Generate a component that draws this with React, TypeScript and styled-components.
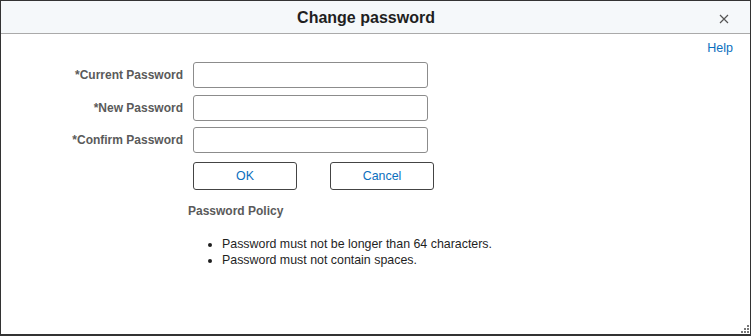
import React, { FC } from 'react'
import styled, { createGlobalStyle } from 'styled-components'

const GlobalStyle = createGlobalStyle`
  html, body {
    margin: 0;
    padding: 0;
    background: #ffffff;
  }
  body {
    font-family: "Liberation Sans", Arial, sans-serif;
    font-size: 12px;
  }
`

const Dialog = styled.div`
  position: relative;
  box-sizing: border-box;
  width: 751px;
  height: 336px;
  border: 1px solid #333333;
  border-bottom-width: 2px;
  background: #ffffff;
  display: flex;
  flex-direction: column;
`

const Header = styled.div`
  height: 32px;
  background: #f5f8fa;
  border-bottom: 1px solid #aaaaaa;
  display: flex;
  align-items: center;
  justify-content: center;
  position: relative;
`

const Title = styled.h1`
  margin: 1px 0 0;
  font-size: 16px;
  font-weight: bold;
  color: #1f1f1f;
  padding-right: 19px;
`

const CloseButton = styled.button`
  position: absolute;
  right: 20px;
  top: 12px;
  width: 12px;
  height: 12px;
  padding: 0;
  border: 0;
  background: none;
  display: flex;
  align-items: center;
  justify-content: center;
`

const Body = styled.div`
  flex: 1;
  padding: 7px 17px 0 0;
  display: flex;
  flex-direction: column;
`

const HelpLink = styled.a`
  align-self: flex-end;
  line-height: 14px;
  font-size: 12.5px;
  color: #0b6fbe;
  text-decoration: none;
`

const Form = styled.div`
  margin-top: 7px;
  display: grid;
  grid-template-columns: 182px 235px;
  column-gap: 10px;
  row-gap: 6.5px;
  align-items: center;
`

const Label = styled.label`
  text-align: right;
  font-weight: bold;
  color: #5a5a5a;
`

const Input = styled.input`
  box-sizing: border-box;
  height: 26px;
  width: 235px;
  margin: 0;
  border: 1px solid #8c8c8c;
  border-radius: 3px;
  background: #ffffff;
`

const Buttons = styled.div`
  margin: 9px 0 0 192px;
  display: flex;
  gap: 33px;
`

const Button = styled.button`
  box-sizing: border-box;
  width: 104px;
  height: 28px;
  border: 1px solid #444444;
  border-radius: 3px;
  background: #ffffff;
  color: #0b6fbe;
  font-family: "Liberation Sans", Arial, sans-serif;
  font-size: 12.4px;
`

const PolicyTitle = styled.div`
  margin: 14px 0 0 187px;
  line-height: 14px;
  font-weight: bold;
  color: #5a5a5a;
`

const PolicyList = styled.ul`
  margin: 18px 0 0 221px;
  padding: 0;
  list-style: disc outside;
  color: #1f1f1f;
  font-size: 12.4px;
  line-height: 16px;
`

const Grip = styled.svg`
  position: absolute;
  right: 0;
  bottom: 0;
`

const rules = [
  'Password must not be longer than 64 characters.',
  'Password must not contain spaces.',
]

const fields = ['*Current Password', '*New Password', '*Confirm Password']

const App: FC = () => (
  <>
    <GlobalStyle />
    <Dialog>
      <Header>
        <Title>Change password</Title>
        <CloseButton aria-label="Close">
          <svg width="10" height="10" viewBox="0 0 10 10">
            <path d="M1 1 L9 9 M9 1 L1 9" stroke="#555555" strokeWidth="1.2" />
          </svg>
        </CloseButton>
      </Header>

      <Body>
        <HelpLink href="#">Help</HelpLink>

        <Form>
          {fields.map((text) => (
            <React.Fragment key={text}>
              <Label>{text}</Label>
              <Input type="password" />
            </React.Fragment>
          ))}
        </Form>

        <Buttons>
          <Button>OK</Button>
          <Button>Cancel</Button>
        </Buttons>

        <PolicyTitle>Password Policy</PolicyTitle>
        <PolicyList>
          {rules.map((rule) => (
            <li key={rule}>{rule}</li>
          ))}
        </PolicyList>
      </Body>

      <Grip width="10" height="10" viewBox="0 0 10 10">
        <rect x="7" y="1" width="2" height="2" fill="#777" />
        <rect x="4" y="4" width="2" height="2" fill="#777" />
        <rect x="7" y="4" width="2" height="2" fill="#777" />
        <rect x="1" y="7" width="2" height="2" fill="#777" />
        <rect x="4" y="7" width="2" height="2" fill="#777" />
        <rect x="7" y="7" width="2" height="2" fill="#777" />
      </Grip>
    </Dialog>
  </>
)

export default App
